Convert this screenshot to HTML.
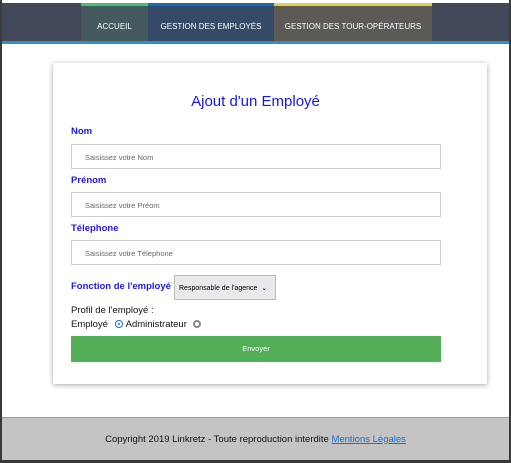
<!DOCTYPE html><html><head><meta charset="utf-8"><style>
*{margin:0;padding:0;box-sizing:border-box}
body{width:511px;height:463px;position:relative;background:#fff;font-family:"Liberation Sans",sans-serif;overflow:hidden}
.bl{position:absolute;top:0;bottom:0;width:2px;background:#3a3a3a}
.nav{position:absolute;left:2px;right:2px;top:3px;height:38px;background:#43475a}
.line{position:absolute;left:2px;right:2px;top:41px;height:3px;background:#2a94c8}
.tab{position:absolute;top:3px;height:38px;color:#fff;font-size:8px;text-align:center;line-height:38px;padding-top:2px}
.card{position:absolute;left:53px;top:63px;width:434px;height:321px;background:#fff;box-shadow:0 1px 5px rgba(0,0,0,.35)}
.t{position:absolute;left:0;right:0;top:93px;text-align:center;color:#1515e6;font-size:15px}
.lb{position:absolute;left:71px;color:#2318e0;font-weight:bold;font-size:9.5px}
.in{position:absolute;left:71px;width:370px;height:25px;border:1px solid #cfcfcf;font-size:7.5px;color:#666;padding:8px 0 0 13px}
.txt{position:absolute;left:71px;font-size:9.5px;color:#111}
</style></head><body>
<div class="bl" style="left:0"></div><div class="bl" style="right:0"></div>
<div class="nav"></div><div class="line"></div>
<div class="tab" style="left:81px;width:67px;background:#445a5e;border-top:3px solid #44c07a">ACCUEIL</div>
<div class="tab" style="left:148px;width:126px;background:#354a66;border-top:3px solid #1070c0">GESTION DES EMPLOYÉS</div>
<div class="tab" style="left:274px;width:158px;background:#5c5a57;border-top:3px solid #e8d04a">GESTION DES TOUR-OPÉRATEURS</div>
<div class="card"></div>
<div class="t">Ajout d'un Employé</div>
<div class="lb" style="top:126px">Nom</div>
<div class="in" style="top:144px">Saisissez votre Nom</div>
<div class="lb" style="top:175px">Prénom</div>
<div class="in" style="top:192px">Saisissez votre Préom</div>
<div class="lb" style="top:223px">Télephone</div>
<div class="in" style="top:240px">Saisissez votre Télephone</div>
<div class="lb" style="top:281px">Fonction de l'employé</div>
<div style="position:absolute;left:174px;top:275px;width:102px;height:25px;background:#e9e9ed;border:1px solid #bbb;font-size:7px;padding:8px 0 0 4px;color:#000">Responsable de l'agence &nbsp;⌄</div>
<div class="txt" style="top:305px">Profil de l'employé :</div>
<div class="txt" style="top:319px">Employé <span style="display:inline-block;width:8px;height:8px;border:1px solid #1a6ed8;border-radius:50%;margin:0 3px 0 4px;vertical-align:-1px;position:relative"><span style="position:absolute;left:2px;top:2px;width:2px;height:2px;background:#1a6ed8;border-radius:50%"></span></span>Administrateur <span style="display:inline-block;width:8px;height:8px;border:2px solid #888;border-radius:50%;margin-left:3px;vertical-align:-1px"></span></div>
<div style="position:absolute;left:71px;top:336px;width:370px;height:26px;background:#52ae57;color:#fff;font-size:7.5px;text-align:center;line-height:26px">Envoyer</div>
<div style="position:absolute;left:2px;right:2px;top:417px;height:43px;background:#c4c4c4;border-top:1px solid #9a9a9a;text-align:center;font-size:9.5px;line-height:44px;color:#111">Copyright 2019 Linkretz - Toute reproduction interdite <span style="color:#1a6ed8;text-decoration:underline">Mentions Légales</span></div>
<div style="position:absolute;left:0;right:0;top:460px;height:3px;background:#3a3a3a"></div>
</body></html>
